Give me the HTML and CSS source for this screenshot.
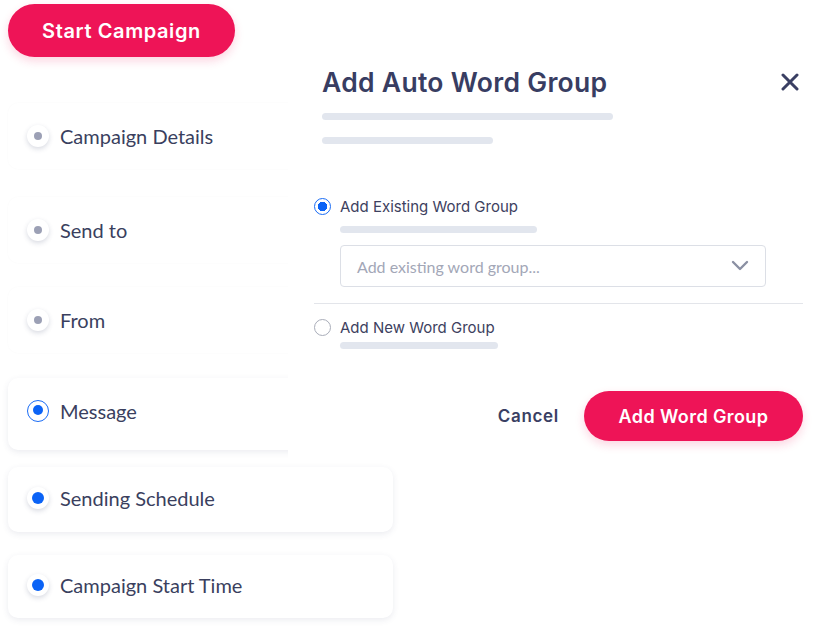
FILE: index.html
```html
<!DOCTYPE html>
<html lang="en">
<head>
<meta charset="utf-8">
<title>Add Auto Word Group</title>
<link rel="stylesheet" href="styles.css">
</head>
<body>
<div class="page">
  <aside class="sidebar">
    <button class="btn-start">Start Campaign</button>
    <ul class="steps">
      <li class="step faint"><span class="dot grey"></span><span class="step-label">Campaign Details</span></li>
      <li class="step faint step-2"><span class="dot grey"></span><span class="step-label">Send to</span></li>
      <li class="step faint"><span class="dot grey"></span><span class="step-label">From</span></li>
      <li class="step card tall"><span class="dot ring"></span><span class="step-label">Message</span></li>
      <li class="step card step-5"><span class="dot blue"></span><span class="step-label">Sending Schedule</span></li>
      <li class="step card step-6"><span class="dot blue"></span><span class="step-label">Campaign Start Time</span></li>
    </ul>
  </aside>

  <section class="modal">
    <header class="modal-head">
      <h1 class="modal-title">Add Auto Word Group</h1>
      <button class="close" aria-label="Close">
        <svg width="18" height="18" viewBox="0 0 18 18"><path d="M2 2 L16 16 M16 2 L2 16" stroke="#3a3f63" stroke-width="3" stroke-linecap="round"/></svg>
      </button>
    </header>
    <div class="skeleton">
      <span class="bar bar-a"></span>
      <span class="bar bar-b"></span>
    </div>

    <div class="option option-first">
      <div class="option-row"><span class="radio checked"></span><span class="option-label">Add Existing Word Group</span></div>
      <span class="bar bar-c"></span>
      <div class="select">
        <span class="placeholder">Add existing word group...</span>
        <svg width="18" height="12" viewBox="0 0 18 12"><path d="M2 2 L9 9 L16 2" fill="none" stroke="#8b90a3" stroke-width="2.4" stroke-linecap="round" stroke-linejoin="round"/></svg>
      </div>
    </div>

    <hr class="divider">

    <div class="option">
      <div class="option-row"><span class="radio"></span><span class="option-label">Add New Word Group</span></div>
      <span class="bar bar-d"></span>
    </div>

    <footer class="actions">
      <button class="btn-cancel">Cancel</button>
      <button class="btn-add">Add Word Group</button>
    </footer>
  </section>
</div>
</body>
</html>
```

FILE: styles.css
```css
* { box-sizing: border-box; }
html, body { margin: 0; padding: 0; background: #ffffff; }
body { width: 828px; height: 627px; overflow: hidden; }

.page { position: relative; width: 828px; height: 627px; }

.sidebar {
  display: flex;
  flex-direction: column;
  padding: 4px 0 0 8px;
  width: 393px;
}

.btn-start {
  align-self: flex-start;
  width: 227px;
  height: 53px;
  border: none;
  border-radius: 27px;
  background: #ee1457;
  color: #ffffff;
  font-family: "Inter", sans-serif;
  font-weight: 600;
  font-size: 20px;
  letter-spacing: 0.6px;
  box-shadow: 0 4px 10px rgba(238, 20, 87, 0.18);
}

.steps {
  list-style: none;
  margin: 46px 0 0 0;
  padding: 0;
  display: flex;
  flex-direction: column;
  gap: 24px;
}

.step {
  display: flex;
  align-items: center;
  gap: 11px;
  height: 66px;
  padding-left: 19px;
  border-radius: 10px;
  font-family: "Lato", sans-serif;
  font-size: 20px;
  color: #3a3f5e;
}
.step.faint { box-shadow: 0 0 2px rgba(60, 70, 110, 0.03); }
.step.card { background: #fff; box-shadow: 0 2px 6px rgba(60, 70, 110, 0.1); }
.step-2 { margin-top: 4px; }
.step.tall { height: 72px; margin-top: 1px; padding-bottom: 7px; }
.step-5 { margin-top: -7px; height: 65px; padding-bottom: 4px; }
.step-6 { margin-top: -1px; height: 63px; padding-bottom: 3px; }

.dot {
  position: relative;
  flex: none;
  width: 22px;
  height: 22px;
  border-radius: 50%;
  background: #fff;
  box-shadow: 0 2px 5px rgba(60, 70, 110, 0.2);
}
.dot::after {
  content: "";
  position: absolute;
  left: 7px; top: 7px;
  width: 8px; height: 8px;
  border-radius: 50%;
}
.dot.grey::after { background: #9ca0b5; }
.dot.blue::after { background: #0b63f6; left: 5px; top: 5px; width: 12px; height: 12px; }
.dot.ring { border: 1.5px solid #1a6cf5; box-shadow: none; }
.dot.ring::after { background: #0b63f6; left: 4.5px; top: 4.5px; width: 10px; height: 10px; }

.modal {
  position: absolute;
  left: 288px;
  top: 44px;
  width: 540px;
  height: 416px;
  background: #ffffff;
  padding: 22px 25px 0 26px;
  display: flex;
  flex-direction: column;
}

.modal-head {
  display: flex;
  align-items: center;
  justify-content: space-between;
  padding-left: 8px;
}
.modal-title {
  margin: 0;
  font-family: "Inter", sans-serif;
  font-weight: 600;
  font-size: 26.5px;
  color: #383d62;
  letter-spacing: 0.3px;
}
.close {
  border: none;
  background: none;
  padding: 0;
  margin-right: 4px;
  display: flex;
}

.skeleton {
  display: flex;
  flex-direction: column;
  gap: 17px;
  padding-left: 8px;
  margin-top: 15px;
}
.bar {
  display: block;
  height: 7px;
  border-radius: 4px;
  background: #e2e6ee;
}
.bar-a { width: 291px; }
.bar-b { width: 171px; }
.bar-c { width: 197px; margin-left: 26px; margin-top: 10px; }
.bar-d { width: 158px; margin-left: 26px; margin-top: 5px; }

.option { display: flex; flex-direction: column; }
.option-first { margin-top: 53px; }

.option-row { display: flex; align-items: center; gap: 9px; }
.option-label {
  font-family: "Inter", sans-serif;
  font-size: 15px;
  color: #3d4160;
}
.radio {
  flex: none;
  width: 17px;
  height: 17px;
  border-radius: 50%;
  border: 1.5px solid #a9adb9;
  background: #fff;
}
.radio.checked {
  border: 1.5px solid #1a6cf5;
  background: radial-gradient(circle, #0b63f6 0 4.5px, #fff 5px);
}

.select {
  margin: 12px 0 0 26px;
  width: 426px;
  height: 42px;
  border: 1px solid #dcdfe6;
  border-radius: 4px;
  display: flex;
  align-items: center;
  justify-content: space-between;
  padding: 0 16px 0 16px;
}
.placeholder {
  font-family: "Lato", sans-serif;
  font-size: 16px;
  color: #a3a7b7;
}

.divider {
  margin: 16px 0 14px 0;
  border: none;
  border-top: 1px solid #e3e5ea;
  width: 489px;
}

.actions {
  display: flex;
  justify-content: flex-end;
  align-items: center;
  gap: 25px;
  margin-top: 42px;
}
.btn-cancel {
  border: none;
  background: none;
  font-family: "Inter", sans-serif;
  font-weight: 600;
  font-size: 17px;
  letter-spacing: 0.7px;
  color: #3a3f63;
  padding: 0;
}
.btn-add {
  width: 219px;
  height: 50px;
  border: none;
  border-radius: 25px;
  background: #ee1457;
  color: #fff;
  font-family: "Inter", sans-serif;
  font-weight: 600;
  font-size: 18px;
  letter-spacing: 0.4px;
  box-shadow: 0 4px 10px rgba(238, 20, 87, 0.18);
}
```
